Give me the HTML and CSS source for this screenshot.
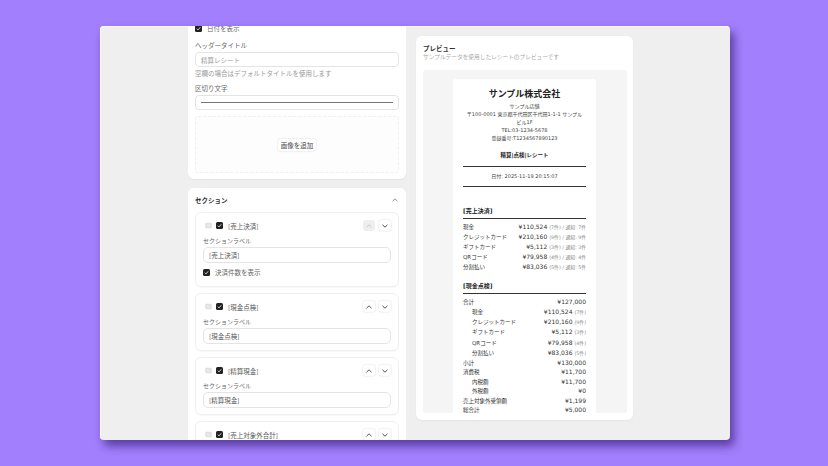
FILE: index.html
```html
<!DOCTYPE html>
<html lang="ja">

<head>
    <meta charset="UTF-8">
    <meta name="viewport" content="width=device-width, initial-scale=1.0">
    <title>レシート設定</title>
    <link rel="stylesheet" href="styles.css">
</head>

<body>
    <div class="window">
        <div class="settings">
            <div class="settings-inner">
                <div class="card card-header">
                    <div class="check-row"><span class="check"><svg viewBox="0 0 8 8"><path d="M2 4.2l1.4 1.4L6 2.6"/></svg></span>日付を表示</div>
                    <div class="label first-label">ヘッダータイトル</div>
                    <div class="input placeholder">精算レシート</div>
                    <div class="hint">空欄の場合はデフォルトタイトルを使用します</div>
                    <div class="label">区切り文字</div>
                    <div class="input"><span class="divider-sample"></span></div>
                    <div class="dropzone"><span class="add-image">画像を追加</span></div>
                </div>

                <div class="card">
                    <div class="card-title">
                        <span>セクション</span>
                        <svg class="chev" viewBox="0 0 8 8"><path d="M1.5 5.2L4 2.8l2.5 2.4"/></svg>
                    </div>

                    <div class="section-item">
                        <div class="item-head">
                            <svg class="grip" viewBox="0 0 8 8"><path d="M1 1.5h6v5H1zM1 3.2h6M1 4.8h6"/></svg>
                            <span class="check"><svg viewBox="0 0 8 8"><path d="M2 4.2l1.4 1.4L6 2.6"/></svg></span>
                            <span class="item-name">[売上決済]</span>
                            <span class="move disabled"><svg viewBox="0 0 8 8"><path d="M1.5 5.2L4 2.8l2.5 2.4"/></svg></span>
                            <span class="move"><svg viewBox="0 0 8 8"><path d="M1.5 2.8L4 5.2l2.5-2.4"/></svg></span>
                        </div>
                        <div class="label">セクションラベル</div>
                        <div class="input">[売上決済]</div>
                        <div class="check-row sub-check"><span class="check"><svg viewBox="0 0 8 8"><path d="M2 4.2l1.4 1.4L6 2.6"/></svg></span>決済件数を表示</div>
                    </div>

                    <div class="section-item">
                        <div class="item-head">
                            <svg class="grip" viewBox="0 0 8 8"><path d="M1 1.5h6v5H1zM1 3.2h6M1 4.8h6"/></svg>
                            <span class="check"><svg viewBox="0 0 8 8"><path d="M2 4.2l1.4 1.4L6 2.6"/></svg></span>
                            <span class="item-name">[現金点検]</span>
                            <span class="move"><svg viewBox="0 0 8 8"><path d="M1.5 5.2L4 2.8l2.5 2.4"/></svg></span>
                            <span class="move"><svg viewBox="0 0 8 8"><path d="M1.5 2.8L4 5.2l2.5-2.4"/></svg></span>
                        </div>
                        <div class="label">セクションラベル</div>
                        <div class="input">[現金点検]</div>
                    </div>

                    <div class="section-item">
                        <div class="item-head">
                            <svg class="grip" viewBox="0 0 8 8"><path d="M1 1.5h6v5H1zM1 3.2h6M1 4.8h6"/></svg>
                            <span class="check"><svg viewBox="0 0 8 8"><path d="M2 4.2l1.4 1.4L6 2.6"/></svg></span>
                            <span class="item-name">[精算現金]</span>
                            <span class="move"><svg viewBox="0 0 8 8"><path d="M1.5 5.2L4 2.8l2.5 2.4"/></svg></span>
                            <span class="move"><svg viewBox="0 0 8 8"><path d="M1.5 2.8L4 5.2l2.5-2.4"/></svg></span>
                        </div>
                        <div class="label">セクションラベル</div>
                        <div class="input">[精算現金]</div>
                    </div>

                    <div class="section-item">
                        <div class="item-head">
                            <svg class="grip" viewBox="0 0 8 8"><path d="M1 1.5h6v5H1zM1 3.2h6M1 4.8h6"/></svg>
                            <span class="check"><svg viewBox="0 0 8 8"><path d="M2 4.2l1.4 1.4L6 2.6"/></svg></span>
                            <span class="item-name">[売上対象外合計]</span>
                            <span class="move"><svg viewBox="0 0 8 8"><path d="M1.5 5.2L4 2.8l2.5 2.4"/></svg></span>
                            <span class="move"><svg viewBox="0 0 8 8"><path d="M1.5 2.8L4 5.2l2.5-2.4"/></svg></span>
                        </div>
                    </div>
                </div>
            </div>
        </div>

        <div class="card preview">
            <div class="preview-title">プレビュー</div>
            <div class="preview-sub">サンプルデータを使用したレシートのプレビューです</div>
            <div class="preview-area">
                <div class="receipt">
                    <div class="shop-name">サンプル株式会社</div>
                    <div class="shop-info">
                        <div>サンプル店舗</div>
                        <div>〒100-0001 東京都千代田区千代田1-1-1 サンプル<br>ビル1F</div>
                        <div>TEL:03-1234-5678</div>
                        <div>登録番号:T1234567890123</div>
                    </div>
                    <div class="doc-title">精算|点検|レシート</div>
                    <div class="date-line">日付: 2025-11-19 20:15:07</div>

                    <div class="block-title block-first">[売上決済]</div>
                    <div class="rows pay-rows">
                        <div class="row"><span>現金</span><span class="amount">¥110,524 <small>(7件) / 通知: 7件</small></span></div>
                        <div class="row"><span>クレジットカード</span><span class="amount">¥210,160 <small>(9件) / 通知: 9件</small></span></div>
                        <div class="row"><span>ギフトカード</span><span class="amount">¥5,112 <small>(3件) / 通知: 3件</small></span></div>
                        <div class="row"><span>QRコード</span><span class="amount">¥79,958 <small>(4件) / 通知: 4件</small></span></div>
                        <div class="row"><span>分割払い</span><span class="amount">¥83,036 <small>(5件) / 通知: 5件</small></span></div>
                    </div>

                    <div class="block-title">[現金点検]</div>
                    <div class="rows">
                        <div class="row"><span>合計</span><span class="amount">¥127,000</span></div>
                        <div class="row indent"><span>現金</span><span class="amount">¥110,524 <small>(7件)</small></span></div>
                        <div class="row indent"><span>クレジットカード</span><span class="amount">¥210,160 <small>(9件)</small></span></div>
                        <div class="row indent"><span>ギフトカード</span><span class="amount">¥5,112 <small>(3件)</small></span></div>
                        <div class="row indent"><span>QRコード</span><span class="amount">¥79,958 <small>(4件)</small></span></div>
                        <div class="row indent"><span>分割払い</span><span class="amount">¥83,036 <small>(5件)</small></span></div>
                        <div class="row"><span>小計</span><span class="amount">¥130,000</span></div>
                        <div class="row"><span>消費税</span><span class="amount">¥11,700</span></div>
                        <div class="row indent-small"><span>内税額</span><span class="amount">¥11,700</span></div>
                        <div class="row indent-small"><span>外税額</span><span class="amount">¥0</span></div>
                        <div class="row"><span>売上対象外受領額</span><span class="amount">¥1,199</span></div>
                        <div class="row"><span>総合計</span><span class="amount">¥5,000</span></div>
                    </div>
                </div>
            </div>
        </div>
    </div>
</body>

</html>
```

FILE: styles.css
```css
* {
    box-sizing: border-box;
}

html,
body {
    height: 100%;
}

body {
    margin: 0;
    padding: 26px 98px 26px 100px;
    background-color: #a27ffd;
    font-family: "Noto Sans CJK JP", "Liberation Sans", sans-serif;
    overflow: hidden;
}

.window {
    display: flex;
    gap: 10px;
    height: 414px;
    padding-left: 88px;
    background-color: #efefef;
    border-radius: 4px;
    box-shadow: inset 1px 1px 0 #fafafa, 4px 6px 10px rgba(50, 25, 110, 0.65);
    overflow: hidden;
}

.settings {
    width: 218px;
    height: 100%;
    overflow: hidden;
}

/* panel is scrolled a little, the first card starts above the window */
.settings-inner {
    margin-top: -20px;
}

.card {
    background-color: #fff;
    border-radius: 6px;
    padding: 0 7px;
    box-shadow: 0 1px 2px rgba(0, 0, 0, 0.05);
}

.card-header {
    height: 173px;
    padding-top: 18px;
    margin-bottom: 9px;
}

.check-row {
    display: flex;
    align-items: center;
    gap: 5px;
    height: 9px;
    font-size: 6.5px;
    line-height: 9px;
    color: #666;
}

.check {
    flex: none;
    display: flex;
    width: 7px;
    height: 7px;
    background-color: #222;
    border-radius: 1.5px;
}

.check svg {
    width: 7px;
    height: 7px;
    fill: none;
    stroke: #fff;
    stroke-width: 0.9;
}

.label {
    height: 9px;
    margin-top: 6px;
    font-size: 6.5px;
    line-height: 9px;
    color: #666;
}

.first-label {
    margin-top: 8px;
}

.input {
    display: flex;
    align-items: center;
    height: 15px;
    margin-top: 2px;
    padding: 0 5px;
    background-color: #fff;
    border: 1px solid #e4e4e4;
    border-radius: 4px;
    font-size: 6.5px;
    color: #555;
}

.placeholder {
    color: #999;
}

.hint {
    height: 9px;
    margin-top: 2px;
    font-size: 6.5px;
    line-height: 9px;
    color: #999;
}

.hint + .label {
    margin-top: 6px;
}

.divider-sample {
    display: block;
    flex: 1;
    height: 1px;
    background-color: #777;
}

.dropzone {
    display: flex;
    align-items: center;
    justify-content: center;
    height: 57px;
    margin-top: 6px;
    background-color: #fdfdfd;
    border: 1px dashed #f0f0f0;
    border-radius: 3px;
}

.add-image {
    padding: 0 3px;
    height: 12px;
    background-color: #fff;
    border-radius: 3px;
    box-shadow: 0 0 2px rgba(0, 0, 0, 0.18);
    font-size: 6.5px;
    line-height: 12px;
    color: #444;
}

.card-title {
    display: flex;
    align-items: center;
    justify-content: space-between;
    height: 23px;
    margin-bottom: 1px;
    font-size: 6.5px;
    font-weight: 700;
    color: #333;
}

.chev {
    width: 8px;
    height: 8px;
    fill: none;
    stroke: #777;
    stroke-width: 0.8;
}

.section-item {
    padding: 7px 7px 0;
    margin-bottom: 6px;
    border: 1px solid #f0f0f0;
    border-radius: 6px;
    height: 75px;
    box-shadow: 0 1px 1px rgba(0, 0, 0, 0.03);
}

.section-item + .section-item {
    height: 58px;
    margin-bottom: 6px;
}

.item-head {
    display: flex;
    align-items: center;
    height: 11px;
}

.grip {
    flex: none;
    width: 7px;
    height: 7px;
    margin-left: 2px;
    margin-right: 4px;
    fill: none;
    stroke: #c4c4c4;
    stroke-width: 0.7;
}

.item-name {
    flex: 1;
    margin-left: 5px;
    font-size: 6.5px;
    color: #555;
}

.move {
    display: flex;
    align-items: center;
    justify-content: center;
    width: 12px;
    height: 11px;
    margin-left: 4px;
    background-color: #fff;
    border-radius: 3px;
    box-shadow: 0 0 2px rgba(0, 0, 0, 0.18);
}

.move svg {
    width: 8px;
    height: 8px;
    fill: none;
    stroke: #444;
    stroke-width: 0.9;
}

.move.disabled {
    background-color: #efefef;
    box-shadow: none;
}

.move.disabled svg {
    stroke: #c4c4c4;
}

.section-item .label {
    margin-top: 6px;
    height: 8px;
    line-height: 8px;
    font-size: 6px;
}

.section-item .input {
    height: 16px;
    margin-top: 2px;
    border-radius: 5px;
}

.sub-check {
    margin-top: 5px;
}

.preview {
    width: 217px;
    height: 384px;
    margin-top: 10px;
    padding: 7px 6px 7px 7px;
}

.preview-title {
    height: 10px;
    font-size: 6.5px;
    font-weight: 700;
    line-height: 10px;
    color: #333;
}

.preview-sub {
    height: 8px;
    font-size: 5.7px;
    line-height: 8px;
    color: #aaa;
}

.preview-area {
    height: 343px;
    margin-top: 9px;
    padding: 9px 31px 0 30px;
    background-color: #f5f5f5;
    border-radius: 3px;
    overflow: hidden;
}

.receipt {
    height: 360px;
    padding: 9px 10px 0;
    background-color: #fff;
    border-radius: 3px;
    color: #222;
    font-family: "DejaVu Sans", "Noto Sans CJK JP", sans-serif;
}

.shop-name {
    height: 13px;
    font-size: 9px;
    font-weight: 700;
    line-height: 13px;
    text-align: center;
}

.shop-info {
    margin-top: 2px;
    font-size: 5px;
    line-height: 7.9px;
    text-align: center;
    color: #444;
}

.doc-title {
    height: 8px;
    margin-top: 8px;
    font-size: 5.5px;
    font-weight: 700;
    line-height: 8px;
    text-align: center;
}

.date-line {
    height: 21px;
    margin-top: 7px;
    border-top: 1px solid #333;
    border-bottom: 1px solid #333;
    font-size: 5px;
    line-height: 18px;
    text-align: center;
    color: #444;
}

.block-title {
    height: 12px;
    margin-top: 10px;
    border-bottom: 1px solid #333;
    font-size: 6px;
    font-weight: 700;
    line-height: 8px;
}

.block-first {
    margin-top: 20px;
}

.rows {
    margin-top: 3px;
}

.row {
    display: flex;
    align-items: baseline;
    justify-content: space-between;
    height: 9.5px;
    font-size: 5.5px;
    line-height: 9.5px;
    color: #333;
    white-space: nowrap;
}

.pay-rows .row {
    height: 10.2px;
    line-height: 10.2px;
}

.amount {
    font-size: 6px;
}

.row small {
    font-size: 4.8px;
    line-height: 1;
    color: #888;
}

.indent {
    padding-left: 9px;
    height: 10.2px;
    line-height: 10.2px;
}

.indent-small {
    padding-left: 9px;
}
```
